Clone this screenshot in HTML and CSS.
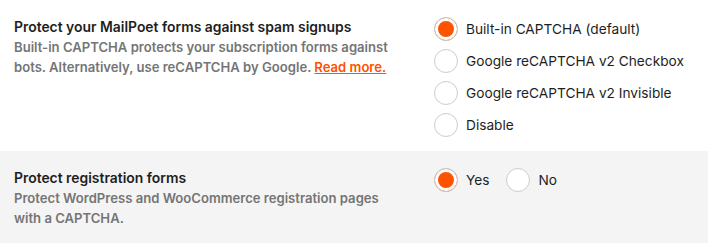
FILE: index.html
```html
<!DOCTYPE html>
<html lang="en">
<head>
    <meta charset="UTF-8">
    <meta name="viewport" content="width=device-width, initial-scale=1.0">
    <title>Settings</title>
    <link rel="stylesheet" href="styles.css">
</head>
<body>
<div class="settings">
    <div class="row">
        <div class="label">
            <h3>Protect your MailPoet forms against spam signups</h3>
            <p>Built-in CAPTCHA protects your subscription forms against bots. Alternatively, use reCAPTCHA by Google. <a href="#">Read more.</a></p>
        </div>
        <div class="field">
            <label class="radio"><input type="radio" name="captcha" checked><i></i> Built-in CAPTCHA (default)</label>
            <label class="radio"><input type="radio" name="captcha"><i></i> Google reCAPTCHA v2 Checkbox</label>
            <label class="radio"><input type="radio" name="captcha"><i></i> Google reCAPTCHA v2 Invisible</label>
            <label class="radio"><input type="radio" name="captcha"><i></i> Disable</label>
        </div>
    </div>
    <div class="row grey">
        <div class="label">
            <h3>Protect registration forms</h3>
            <p>Protect WordPress and WooCommerce registration pages with a CAPTCHA.</p>
        </div>
        <div class="field inline">
            <label class="radio"><input type="radio" name="reg" checked><i></i> Yes</label>
            <label class="radio"><input type="radio" name="reg"><i></i> No</label>
        </div>
    </div>
</div>
</body>
</html>
```

FILE: styles.css
```css
*{
    margin: 0;
    padding: 0;
    box-sizing: border-box;
}
body{
    font-family: Inter, "Noto Sans", sans-serif;
    background: #fff;
    color: #1e1e1e;
}
.row{
    display: grid;
    grid-template-columns: 420px 1fr;
    align-items: start;
    padding: 17px 14px 14px;
}
.row.grey{
    background: #f4f4f4;
    min-height: 92px;
}
.label h3{
    font-size: 13.9px;
    font-weight: 600;
    line-height: 20px;
}
.label p{
    font-size: 13.1px;
    font-weight: 600;
    line-height: 20px;
    color: #757575;
    max-width: 392px;
}
.label p a{
    color: #fe5301;
}
.field{
    display: flex;
    flex-direction: column;
    align-items: flex-start;
    gap: 8px;
}
.field.inline{
    flex-direction: row;
    gap: 17px;
}
.radio{
    display: flex;
    align-items: center;
    gap: 8px;
    font-size: 13.7px;
    line-height: 24px;
    color: #1e1e1e;
    cursor: pointer;
}
.radio input{
    display: none;
}
.radio i{
    width: 24px;
    height: 24px;
    border: 1px solid #ccc;
    border-radius: 50%;
    background: #fff;
    flex: none;
}
.radio input:checked + i{
    background: #fe5301;
    box-shadow: inset 0 0 0 3px #fff;
}
```
